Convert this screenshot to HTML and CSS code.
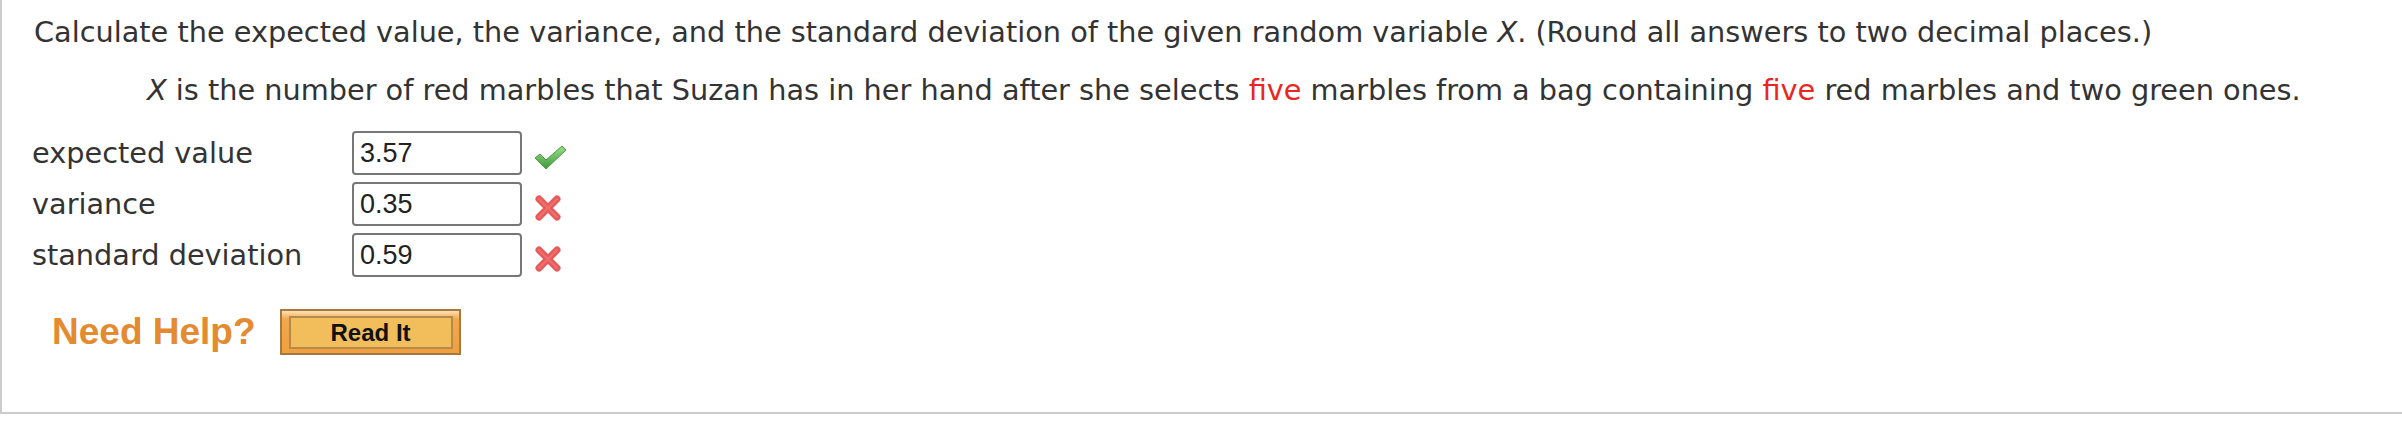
FILE: index.html
```html
<!DOCTYPE html>
<html>
<head>
<meta charset="utf-8">
<link rel="stylesheet" href="styles.css">
</head>
<body>
<div class="card">
  <p class="prompt">Calculate the expected value, the variance, and the standard deviation of the given random variable <i>X</i>. (Round all answers to two decimal places.)</p>
  <p class="desc"><i>X</i> is the number of red marbles that Suzan has in her hand after she selects <span class="red">five</span> marbles from a bag containing <span class="red">five</span> red marbles and two green ones.</p>
  <div class="answers">
    <div class="label">expected value</div>
    <div class="field">3.57</div>
    <div class="mark">
      <svg width="34" height="28" viewBox="0 0 34 28"><defs><linearGradient id="g" x1="0" y1="0" x2="0" y2="1"><stop offset="0" stop-color="#9ade8a"/><stop offset="1" stop-color="#3f9a3a"/></linearGradient></defs><path d="M2 15 L7 11 L13 17 L29 3 L33 7 L13 26 Z" fill="url(#g)" stroke="#4d9a44" stroke-width="1" stroke-linejoin="round"/></svg>
    </div>
    <div class="label">variance</div>
    <div class="field">0.35</div>
    <div class="mark">
      <svg width="30" height="30" viewBox="0 0 30 30"><path d="M6 6 L24 24 M24 6 L6 24" stroke="#e85a5a" stroke-width="7" stroke-linecap="round"/><path d="M6 6 L24 24 M24 6 L6 24" stroke="#f08080" stroke-width="2" stroke-linecap="round" opacity="0.6"/></svg>
    </div>
    <div class="label">standard deviation</div>
    <div class="field">0.59</div>
    <div class="mark">
      <svg width="30" height="30" viewBox="0 0 30 30"><path d="M6 6 L24 24 M24 6 L6 24" stroke="#e85a5a" stroke-width="7" stroke-linecap="round"/><path d="M6 6 L24 24 M24 6 L6 24" stroke="#f08080" stroke-width="2" stroke-linecap="round" opacity="0.6"/></svg>
    </div>
  </div>
  <div class="help">
    <span class="need">Need Help?</span>
    <span class="btn"><span class="btn-inner">Read It</span></span>
  </div>
</div>
</body>
</html>
```
FILE: styles.css
```css
html, body {
  margin: 0;
  padding: 0;
  background: #fff;
}
.card {
  height: 412px;
  border-left: 2px solid #cccccc;
  border-bottom: 2px solid #cccccc;
  font-family: "DejaVu Sans", Verdana, sans-serif;
  color: #333333;
  font-size: 28.75px;
}
.prompt {
  margin: 0;
  padding: 12px 0 0 32px;
  line-height: 40px;
}
.desc {
  margin: 0;
  padding: 18px 0 0 145px;
  line-height: 40px;
}
.red {
  color: #e8281e;
}
.answers {
  display: grid;
  grid-template-columns: 309px 170px auto;
  column-gap: 11px;
  row-gap: 7px;
  align-items: center;
  padding: 21px 0 0 30px;
}
.label {
  line-height: 44px;
}
.field {
  height: 44px;
  box-sizing: border-box;
  border: 2px solid #777;
  border-radius: 4px;
  font-family: "Liberation Sans", Arial, sans-serif;
  font-size: 27px;
  color: #222;
  line-height: 40px;
  padding-left: 6px;
}
.mark {
  display: flex;
  align-items: center;
  padding-top: 7px;
}
.help {
  display: flex;
  align-items: center;
  padding: 32px 0 0 50px;
}
.need {
  font-family: "Liberation Sans", Arial, sans-serif;
  font-weight: bold;
  font-size: 37px;
  color: #e48a30;
  margin-right: 24px;
}
.btn {
  display: inline-block;
  width: 181px;
  height: 46px;
  box-sizing: border-box;
  border: 2px solid #a8783c;
  background: linear-gradient(#fbe2b8 0, #f2a84c 8px, #f0a040 100%);
  padding: 5px 6px 4px 7px;
}
.btn-inner {
  display: flex;
  align-items: center;
  justify-content: center;
  height: 100%;
  box-sizing: border-box;
  border: 2px solid #b58a4a;
  background: #f2be5c;
  font-family: "Liberation Sans", Arial, sans-serif;
  font-weight: bold;
  font-size: 24px;
  color: #111;
}
```
